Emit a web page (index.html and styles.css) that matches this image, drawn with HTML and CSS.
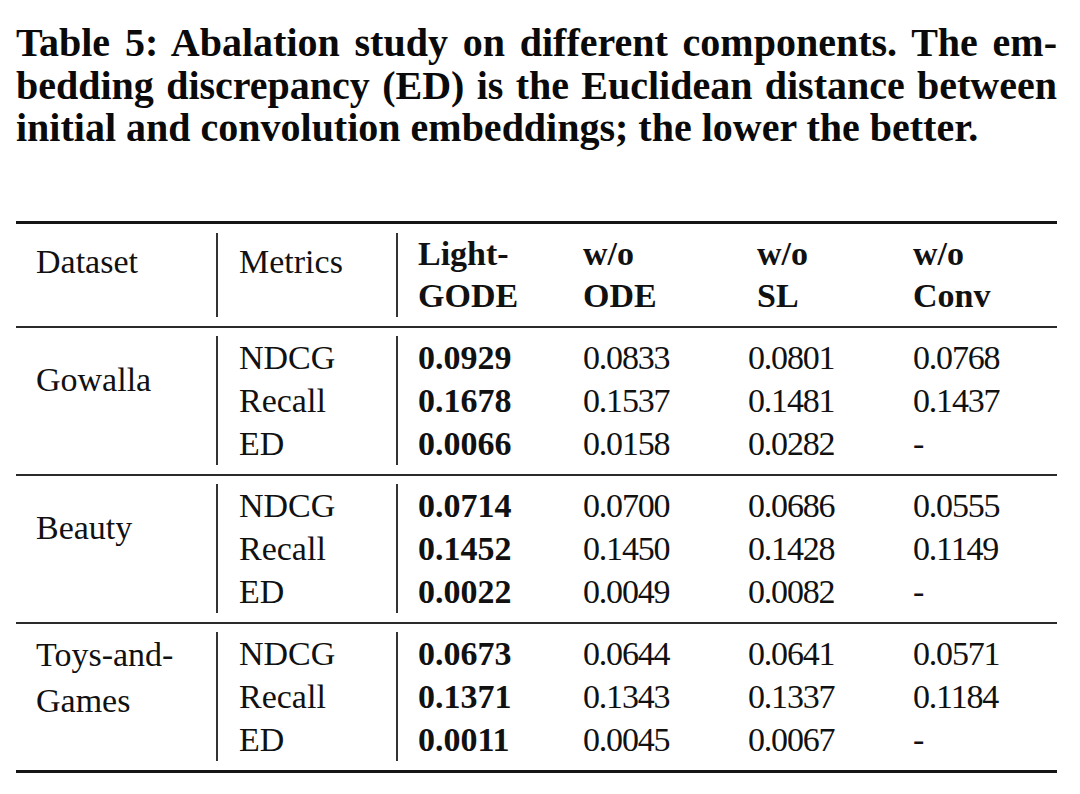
FILE: index.html
```html
<!DOCTYPE html>
<html lang="en">
<head>
<meta charset="UTF-8">
<meta name="viewport" content="width=device-width, initial-scale=1.0">
<title>Table 5</title>
<link rel="stylesheet" href="styles.css">
</head>
<body>
<div class="page">
  <div class="caption">
    <span class="line">Table 5: Abalation study on different components. The em-</span>
    <span class="line">bedding discrepancy (ED) is the Euclidean distance between</span>
    <span class="line last">initial and convolution embeddings; the lower the better.</span>
  </div>

  <div class="tab">
    <div class="head">
      <div class="ds">Dataset</div>
      <div class="mcol">Metrics</div>
      <div class="vals">
        <div class="hd">Light-<br>GODE</div>
        <div class="hd">w/o<br>ODE</div>
        <div class="hd shift">w/o<br>SL</div>
        <div class="hd">w/o<br>Conv</div>
      </div>
    </div>

    <div class="group">
      <div class="ds down">Gowalla</div>
      <div class="mcol">
        <div>NDCG</div>
        <div>Recall</div>
        <div>ED</div>
      </div>
      <div class="vals">
        <div class="best">0.0929</div><div class="num">0.0833</div><div class="num">0.0801</div><div class="num">0.0768</div>
        <div class="best">0.1678</div><div class="num">0.1537</div><div class="num">0.1481</div><div class="num">0.1437</div>
        <div class="best">0.0066</div><div class="num">0.0158</div><div class="num">0.0282</div><div class="num">-</div>
      </div>
    </div>

    <div class="group">
      <div class="ds down">Beauty</div>
      <div class="mcol">
        <div>NDCG</div>
        <div>Recall</div>
        <div>ED</div>
      </div>
      <div class="vals">
        <div class="best">0.0714</div><div class="num">0.0700</div><div class="num">0.0686</div><div class="num">0.0555</div>
        <div class="best">0.1452</div><div class="num">0.1450</div><div class="num">0.1428</div><div class="num">0.1149</div>
        <div class="best">0.0022</div><div class="num">0.0049</div><div class="num">0.0082</div><div class="num">-</div>
      </div>
    </div>

    <div class="group">
      <div class="ds wide">Toys-and-<br>Games</div>
      <div class="mcol">
        <div>NDCG</div>
        <div>Recall</div>
        <div>ED</div>
      </div>
      <div class="vals">
        <div class="best">0.0673</div><div class="num">0.0644</div><div class="num">0.0641</div><div class="num">0.0571</div>
        <div class="best">0.1371</div><div class="num">0.1343</div><div class="num">0.1337</div><div class="num">0.1184</div>
        <div class="best">0.0011</div><div class="num">0.0045</div><div class="num">0.0067</div><div class="num">-</div>
      </div>
    </div>
  </div>
</div>
</body>
</html>
```

FILE: styles.css
```css
body {
  margin: 0;
  background-color: #fff;
  color: #111;
  font-family: "Liberation Serif", "Times New Roman", serif;
}

.page {
  width: 1041px;
  padding: 22px 0 0 16px;
}

.caption {
  font-size: 40px;
  font-weight: bold;
  line-height: 42.5px;
  color: #0a0a0a;
}

.caption .line {
  display: block;
  text-align: justify;
  text-align-last: justify;
}

.caption .line.last {
  text-align-last: left;
}

.tab {
  margin-top: 71px;
  border-top: 3px solid #151515;
  border-bottom: 3px solid #151515;
  font-size: 34px;
}

.head, .group {
  display: flex;
}

.head {
  padding: 9px 0;
  line-height: 42px;
}

.group {
  padding: 8px 0 9px;
  border-top: 2px solid #2a2a2a;
  line-height: 43px;
}

.ds {
  width: 180px;
  padding-left: 20px;
}

.head .ds,
.head .mcol {
  padding-top: 8px;
}

.ds.down {
  padding-top: 22px;
}

.ds.wide {
  line-height: 46px;
}

.mcol {
  width: 157px;
  padding-left: 21px;
  border-left: 2px solid #333;
}

.vals {
  flex: 1;
  padding-left: 20px;
  border-left: 2px solid #333;
  display: grid;
  grid-template-columns: 165px 165px 165px 1fr;
}

.hd {
  font-weight: bold;
}

.hd.shift {
  padding-left: 9px;
}

.best {
  font-weight: bold;
}

.num {
  letter-spacing: -1.2px;
}
```
